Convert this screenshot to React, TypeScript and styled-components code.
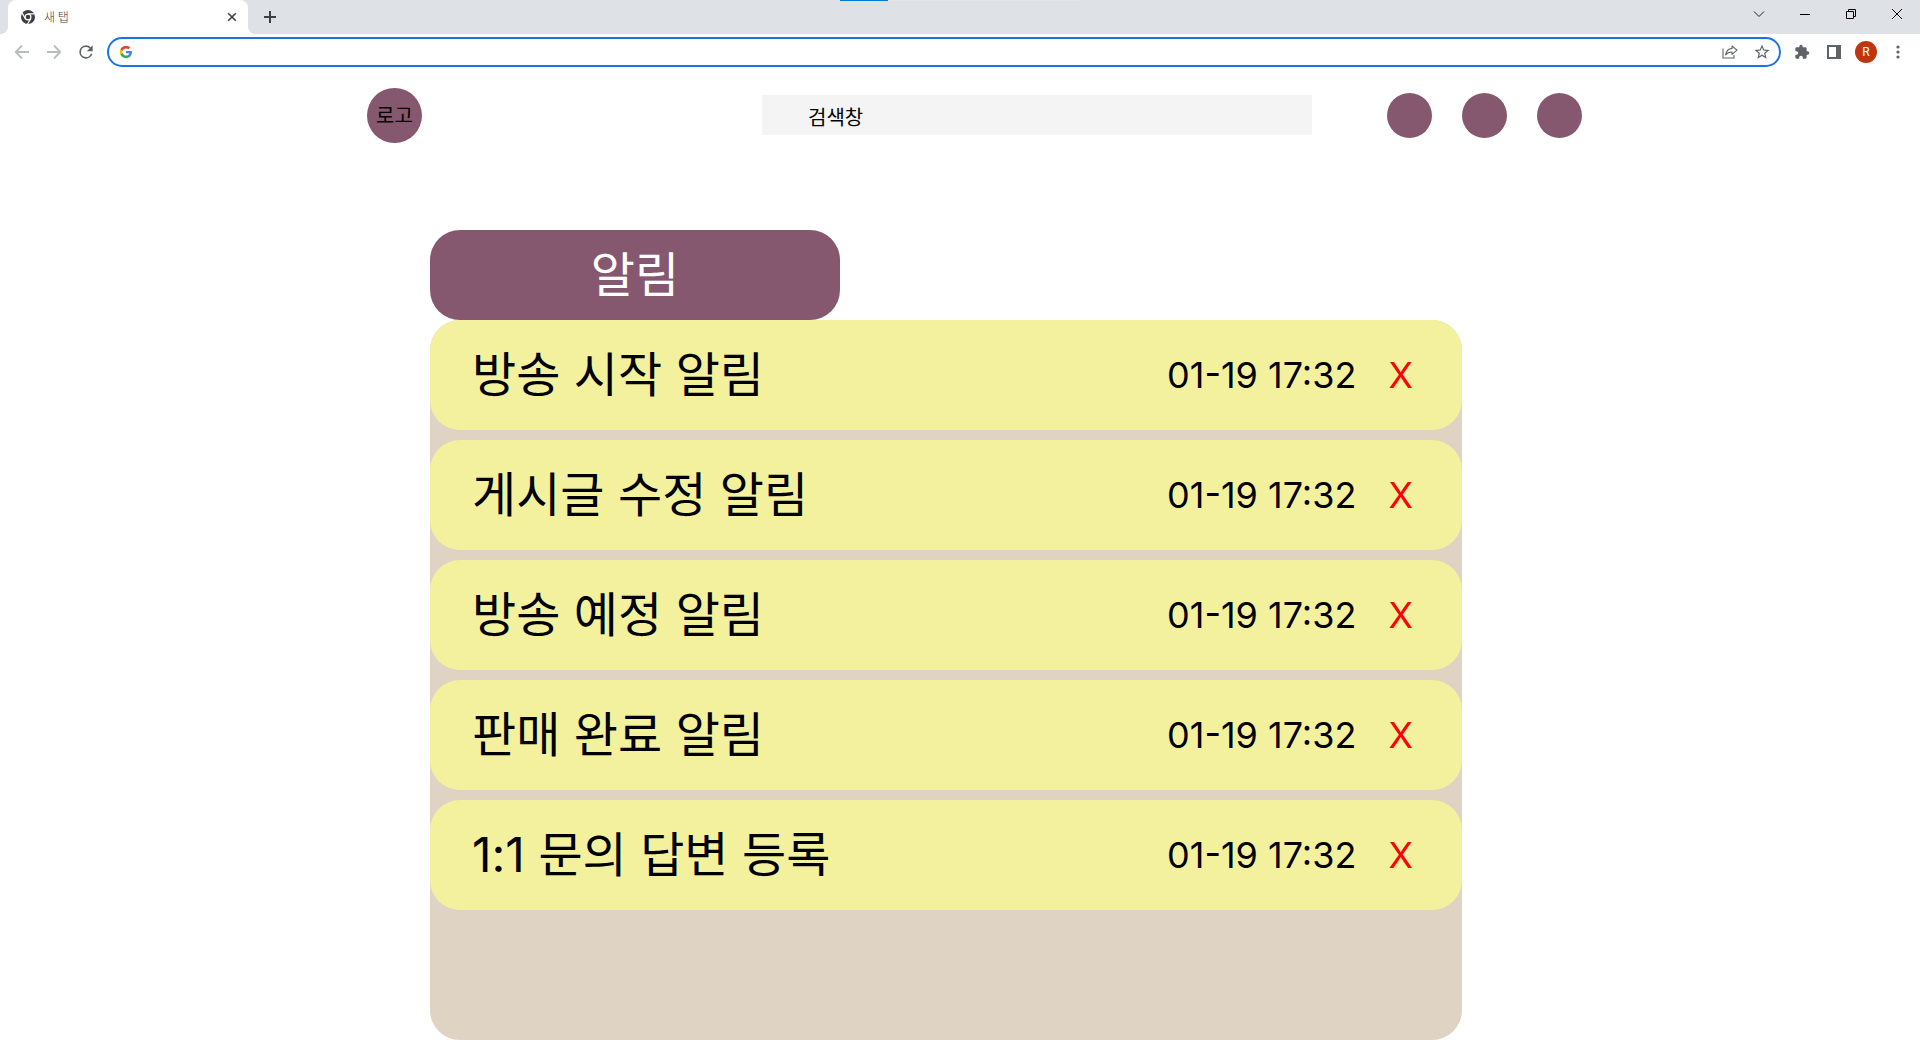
import React from "react";
import styled, { createGlobalStyle } from "styled-components";

const PLUM = "#86586f";

const GlobalStyle = createGlobalStyle`
  *, *::before, *::after { box-sizing: border-box; }
  body {
    margin: 0;
    background: #fff;
    color: #000;
    font-family: Inter, "Noto Sans CJK KR", sans-serif;
  }
  button, input { font-family: inherit; }
`;

/* ---------- browser frame ---------- */

const TabStrip = styled.div`
  position: relative;
  display: flex;
  height: 34px;
  padding-left: 8px;
  background: #dee1e6;
`;

const ProgressTrack = styled.div`
  position: absolute;
  top: 0;
  left: 50%;
  width: 240px;
  height: 1px;
  margin-left: -120px;
  background: #e6e6e6;
`;

const ProgressBar = styled.div`
  width: 20%;
  height: 100%;
  background: #0078d7;
`;

const Tab = styled.div`
  position: relative;
  display: flex;
  align-items: center;
  width: 240px;
  padding: 0 8px 0 12px;
  gap: 8px;
  border-radius: 8px 8px 0 0;
  background: #fff;

  &::before,
  &::after {
    content: "";
    position: absolute;
    bottom: 0;
    width: 8px;
    height: 8px;
  }
  &::before {
    right: 100%;
    background: radial-gradient(circle at 0 0, transparent 8px, #fff 8px);
  }
  &::after {
    left: 100%;
    background: radial-gradient(circle at 100% 0, transparent 8px, #fff 8px);
  }
`;

const TabTitle = styled.span`
  flex: 1;
  font-family: "Noto Sans CJK KR", sans-serif;
  font-size: 12px;
  font-weight: 300;
  line-height: 16px;
  color: #3c4043;
`;

const IconButton = styled.button<{ $width: number; $height: number }>`
  display: flex;
  flex: none;
  align-items: center;
  justify-content: center;
  width: ${(p) => p.$width}px;
  height: ${(p) => p.$height}px;
  padding: 0;
  border: 0;
  background: transparent;
  color: #5f6368;
  cursor: pointer;

  &:disabled {
    color: #babcbe;
    cursor: default;
  }
`;

const NewTabSlot = styled.div`
  display: flex;
  align-items: center;
  padding-left: 8px;
`;

const WindowControls = styled.div`
  display: flex;
  margin-left: auto;
`;

const Toolbar = styled.div`
  display: flex;
  align-items: center;
  height: 36px;
  padding: 0 6px;
`;

const AddressBar = styled.label`
  display: flex;
  flex: 1;
  align-items: center;
  height: 30px;
  margin: 0 5px;
  padding: 0 1px 0 11px;
  border: 2px solid #1a73e8;
  border-radius: 15px;
`;

const AddressInput = styled.input`
  flex: 1;
  min-width: 0;
  padding: 0 8px;
  border: 0;
  outline: 0;
  background: transparent;
  font-size: 14px;
`;

const Avatar = styled.span`
  display: flex;
  align-items: center;
  justify-content: center;
  width: 22px;
  height: 22px;
  border-radius: 50%;
  background: #bf360c;
  color: #fff;
  font-family: Roboto, sans-serif;
  font-size: 12px;
`;

/* ---------- page ---------- */

const HeaderBand = styled.div`
  padding: 18px 0 0 29px;
`;

const Header = styled.header`
  display: flex;
  align-items: center;
  max-width: 1215px;
  margin: 0 auto;
`;

const Logo = styled.a`
  display: flex;
  flex: none;
  align-items: center;
  justify-content: center;
  width: 55px;
  height: 55px;
  border-radius: 50%;
  background: ${PLUM};
  color: #000;
  font-size: 20px;
  line-height: 24px;
  text-decoration: none;
`;

const SearchInput = styled.input`
  flex: 0 1 550px;
  min-width: 0;
  height: 40px;
  margin: 0 75px 1px auto;
  padding: 2px 46px 0;
  border: 0;
  border-radius: 0;
  background: #f4f4f4;
  color: #000;
  font-size: 20px;
`;

const HeaderActions = styled.nav`
  display: flex;
  flex: none;
  gap: 30px;
`;

const RoundButton = styled.button`
  width: 45px;
  height: 45px;
  padding: 0;
  border: 0;
  border-radius: 50%;
  background: ${PLUM};
  cursor: pointer;
`;

const Content = styled.div`
  padding: 87px 28px 0 0;
`;

const Notifications = styled.main`
  max-width: 1032px;
  margin: 0 auto;
`;

const Heading = styled.h1`
  display: flex;
  align-items: center;
  justify-content: center;
  max-width: 410px;
  height: 90px;
  margin: 0;
  border-radius: 30px;
  background: ${PLUM};
  color: #fff;
  font-size: 48px;
  font-weight: 400;
  line-height: 58px;
`;

const List = styled.ul`
  display: flex;
  flex-direction: column;
  gap: 10px;
  min-height: 720px;
  margin: 0;
  padding: 0;
  border-radius: 30px;
  background: #dfd3c3;
  list-style: none;
`;

const Row = styled.li`
  display: flex;
  align-items: center;
  height: 110px;
  padding: 0 49px 0 42px;
  border-radius: 30px;
  background: #f3f19e;
`;

const RowTitle = styled.span`
  flex: 1;
  font-size: 48px;
  line-height: 58px;
`;

const RowTime = styled.time`
  margin-right: 32px;
  font-size: 36px;
  line-height: 44px;
`;

const DeleteButton = styled.button`
  padding: 0;
  border: 0;
  background: transparent;
  color: #f00;
  font-size: 36px;
  line-height: 44px;
  cursor: pointer;
`;

/* ---------- icons ---------- */

const ChromeIcon = () => (
  <svg width="16" height="16" viewBox="0 0 16 16" aria-hidden="true">
    <circle cx="8" cy="8" r="7" fill="#3c4043" />
    <circle cx="8" cy="8" r="2.9" fill="none" stroke="#fff" strokeWidth="1.2" />
    <path d="M8 4.9h6.6M5.3 9.6 2 3.9M10.7 9.6 7.4 15.2" stroke="#fff" strokeWidth="1.2" />
  </svg>
);

const CrossIcon = () => (
  <svg width="10" height="10" viewBox="0 0 10 10" aria-hidden="true">
    <path d="M1.2 1.2l7.6 7.6M8.8 1.2L1.2 8.8" stroke="#3c4043" strokeWidth="1.6" />
  </svg>
);

const PlusIcon = () => (
  <svg width="12" height="12" viewBox="0 0 12 12" aria-hidden="true">
    <path d="M6 0v12M0 6h12" stroke="#3c4043" strokeWidth="2" />
  </svg>
);

const ChevronIcon = () => (
  <svg width="12" height="12" viewBox="0 0 12 12" aria-hidden="true">
    <path d="M1 3.5l5 5 5-5" fill="none" stroke="#222" />
  </svg>
);

const MinimizeIcon = () => (
  <svg width="10" height="10" viewBox="0 0 10 10" aria-hidden="true">
    <path d="M0 5.5h10" stroke="#000" />
  </svg>
);

const RestoreIcon = () => (
  <svg width="10" height="10" viewBox="0 0 10 10" aria-hidden="true">
    <path d="M.5 2.5h7v7h-7zM2.5 2V.5h7v7H8" fill="none" stroke="#000" />
  </svg>
);

const CloseIcon = () => (
  <svg width="10" height="10" viewBox="0 0 10 10" aria-hidden="true">
    <path d="M0 0l10 10M10 0L0 10" stroke="#000" />
  </svg>
);

const ArrowIcon = ({ forward }: { forward?: boolean }) => (
  <svg width="16" height="16" viewBox="0 0 16 16" aria-hidden="true">
    <path
      d={forward ? "M1 8h13M8 1.5L14.3 8 8 14.5" : "M15 8H2M8 1.5L1.7 8 8 14.5"}
      fill="none"
      stroke="currentColor"
      strokeWidth="1.8"
    />
  </svg>
);

const ReloadIcon = () => (
  <svg width="20" height="20" viewBox="0 0 24 24" fill="currentColor" aria-hidden="true">
    <path d="M17.65 6.35A7.96 7.96 0 0 0 12 4a8 8 0 1 0 7.73 10h-2.08A6 6 0 1 1 12 6c1.66 0 3.14.69 4.22 1.78L13 11h7V4l-2.35 2.35z" />
  </svg>
);

const GoogleIcon = () => (
  <svg width="12" height="12" viewBox="2 2 20 20" aria-hidden="true">
    <path fill="#4285f4" d="M22 12.2c0-.7-.1-1.4-.2-2H12v3.9h5.6a4.8 4.8 0 0 1-2.1 3.1v2.6h3.4c2-1.8 3.1-4.5 3.1-7.6z" />
    <path fill="#34a853" d="M12 22c2.8 0 5.2-.9 6.9-2.5l-3.4-2.6c-.9.6-2.1 1-3.500 1-2.700 0-5-1.800-5.800-4.300H2.700v2.700A10 10 0 0 0 12 22z" />
    <path fill="#fbbc05" d="M6.200 13.900a6 6 0 0 1 0-3.800V7.400H2.700a10 10 0 0 0 0 9.200z" />
    <path fill="#ea4335" d="M12 6c1.500 0 2.900.5 4 1.500l3-2.900A10 10 0 0 0 2.700 7.400l3.500 2.700C7 7.700 9.300 6 12 6z" />
  </svg>
);

const ShareIcon = () => (
  <svg width="16" height="14" viewBox="0 0 16 14" fill="none" stroke="currentColor" strokeWidth="1.1" aria-hidden="true">
    <path d="M1 3.5v9.5h11v-3" />
    <path d="M10 1l5 4.2-5 4.2V7C7.2 6.9 5.2 7.8 3.7 9.8 4.2 6.3 6.3 3.8 10 3.4z" strokeLinejoin="round" />
  </svg>
);

const StarIcon = () => (
  <svg width="18" height="18" viewBox="0 0 24 24" fill="currentColor" aria-hidden="true">
    <path d="M22 9.24l-7.19-.62L12 2 9.19 8.63 2 9.24l5.46 4.73L5.82 21 12 17.27 18.18 21l-1.63-7.03L22 9.24zM12 15.4l-3.76 2.27 1-4.28-3.32-2.88 4.38-.38L12 6.1l1.71 4.04 4.38.38-3.32 2.88 1 4.28L12 15.4z" />
  </svg>
);

const ExtensionIcon = () => (
  <svg width="16" height="16" viewBox="0 0 24 24" fill="currentColor" aria-hidden="true">
    <path d="M20.5 11H19V7c0-1.1-.9-2-2-2h-4V3.5a2.5 2.5 0 0 0-5 0V5H4c-1.1 0-1.99.9-1.99 2v3.8H3.5c1.49 0 2.7 1.21 2.7 2.7s-1.21 2.7-2.7 2.7H2V20c0 1.1.9 2 2 2h3.8v-1.5c0-1.49 1.21-2.7 2.7-2.7s2.7 1.21 2.7 2.7V22H17c1.1 0 2-.9 2-2v-4h1.5a2.5 2.5 0 0 0 0-5z" />
  </svg>
);

const SidePanelIcon = () => (
  <svg width="14" height="14" viewBox="0 0 14 14" aria-hidden="true">
    <path d="M0 0h14v14H0zM2 2v10h7V2z" fill="currentColor" fillRule="evenodd" />
  </svg>
);

const MenuIcon = () => (
  <svg width="4" height="14" viewBox="0 0 4 14" fill="currentColor" aria-hidden="true">
    <circle cx="2" cy="2" r="1.6" />
    <circle cx="2" cy="7" r="1.6" />
    <circle cx="2" cy="12" r="1.6" />
  </svg>
);

/* ---------- app ---------- */

const notifications = [
  { id: 1, title: "방송 시작 알림", time: "01-19 17:32" },
  { id: 2, title: "게시글 수정 알림", time: "01-19 17:32" },
  { id: 3, title: "방송 예정 알림", time: "01-19 17:32" },
  { id: 4, title: "판매 완료 알림", time: "01-19 17:32" },
  { id: 5, title: "1:1 문의 답변 등록", time: "01-19 17:32" },
];

const BrowserFrame = () => (
  <div>
    <TabStrip>
      <ProgressTrack>
        <ProgressBar />
      </ProgressTrack>
      <Tab>
        <ChromeIcon />
        <TabTitle>새 탭</TabTitle>
        <IconButton $width={16} $height={16} aria-label="탭 닫기">
          <CrossIcon />
        </IconButton>
      </Tab>
      <NewTabSlot>
        <IconButton $width={28} $height={28} aria-label="새 탭 열기">
          <PlusIcon />
        </IconButton>
      </NewTabSlot>
      <WindowControls>
        <IconButton $width={46} $height={28} aria-label="탭 검색"><ChevronIcon /></IconButton>
        <IconButton $width={46} $height={28} aria-label="최소화"><MinimizeIcon /></IconButton>
        <IconButton $width={46} $height={28} aria-label="이전 크기로"><RestoreIcon /></IconButton>
        <IconButton $width={46} $height={28} aria-label="닫기"><CloseIcon /></IconButton>
      </WindowControls>
    </TabStrip>
    <Toolbar>
      <IconButton $width={32} $height={32} aria-label="뒤로" disabled><ArrowIcon /></IconButton>
      <IconButton $width={32} $height={32} aria-label="앞으로" disabled><ArrowIcon forward /></IconButton>
      <IconButton $width={32} $height={32} aria-label="새로고침"><ReloadIcon /></IconButton>
      <AddressBar>
        <GoogleIcon />
        <AddressInput type="text" aria-label="주소창" />
        <IconButton $width={32} $height={26} aria-label="공유"><ShareIcon /></IconButton>
        <IconButton $width={32} $height={26} aria-label="북마크"><StarIcon /></IconButton>
      </AddressBar>
      <IconButton $width={32} $height={32} aria-label="확장 프로그램"><ExtensionIcon /></IconButton>
      <IconButton $width={32} $height={32} aria-label="측면 패널"><SidePanelIcon /></IconButton>
      <IconButton $width={32} $height={32} aria-label="프로필"><Avatar>R</Avatar></IconButton>
      <IconButton $width={32} $height={32} aria-label="메뉴"><MenuIcon /></IconButton>
    </Toolbar>
  </div>
);

export default function App() {
  return (
    <>
      <GlobalStyle />
      <BrowserFrame />
      <HeaderBand>
        <Header>
          <Logo href="#">로고</Logo>
          <SearchInput type="text" aria-label="검색창" defaultValue="검색창" />
          <HeaderActions>
            <RoundButton aria-label="메뉴 1" />
            <RoundButton aria-label="메뉴 2" />
            <RoundButton aria-label="메뉴 3" />
          </HeaderActions>
        </Header>
      </HeaderBand>
      <Content>
        <Notifications>
          <Heading>알림</Heading>
          <List>
            {notifications.map((item) => (
              <Row key={item.id}>
                <RowTitle>{item.title}</RowTitle>
                <RowTime>{item.time}</RowTime>
                <DeleteButton aria-label={`${item.title} 삭제`}>X</DeleteButton>
              </Row>
            ))}
          </List>
        </Notifications>
      </Content>
    </>
  );
}
